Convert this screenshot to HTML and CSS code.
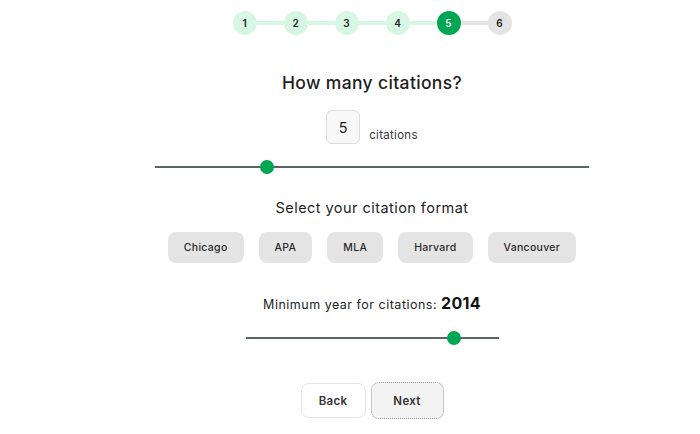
FILE: index.html
```html
<!DOCTYPE html>
<html lang="en">
<head>
<meta charset="utf-8">
<title>Citations</title>
<link rel="stylesheet" href="styles.css">
</head>
<body>
<div class="page">
  <main class="wizard">
    <ol class="stepper">
      <li class="step done">1</li>
      <li class="link done"></li>
      <li class="step done">2</li>
      <li class="link done"></li>
      <li class="step done">3</li>
      <li class="link done"></li>
      <li class="step done">4</li>
      <li class="link done"></li>
      <li class="step active">5</li>
      <li class="link"></li>
      <li class="step">6</li>
    </ol>

    <h1 class="title">How many citations?</h1>
    <div class="count-row">
      <div class="count-box">5</div>
      <span class="count-unit">citations</span>
    </div>
    <input class="range range-wide" type="range" min="0" max="20" value="5">

    <h2 class="subtitle">Select your citation format</h2>
    <div class="formats">
      <button class="format">Chicago</button>
      <button class="format">APA</button>
      <button class="format">MLA</button>
      <button class="format">Harvard</button>
      <button class="format">Vancouver</button>
    </div>

    <p class="year-label">Minimum year for citations: <strong class="year">2014</strong></p>
    <input class="range range-narrow" type="range" min="1960" max="2024" value="2014">

    <div class="nav">
      <button class="nav-btn back">Back</button>
      <button class="nav-btn next">Next</button>
    </div>
  </main>
</div>
</body>
</html>
```
FILE: styles.css
```css
* { box-sizing: border-box; }
html, body { margin: 0; padding: 0; background: #ffffff; }
body {
  font-family: "Inter", "Noto Sans", "Liberation Sans", sans-serif;
  color: #1f1f1f;
}
.page {
  padding-left: 44px;
}
.wizard {
  display: flex;
  flex-direction: column;
  align-items: center;
}
.stepper {
  list-style: none;
  margin: 11px 0 0 0;
  padding: 0;
  display: flex;
  align-items: center;
}
.step {
  width: 24px;
  height: 24px;
  border-radius: 50%;
  background: #e4e4e4;
  color: #222;
  font-size: 10px;
  font-weight: 600;
  display: flex;
  align-items: center;
  justify-content: center;
}
.step.done { background: #d6f7e3; }
.step.active { background: #00a651; color: #ffffff; }
.link {
  width: 27px;
  height: 4px;
  background: #e4e4e4;
}
.link.done { background: #d6f7e3; }

.title {
  margin: 36px 0 0 0;
  font-size: 17.5px;
  line-height: 24px;
  font-weight: 500;
  letter-spacing: 0.35px;
  color: #1e1e1e;
}
.count-row {
  margin-top: 15px;
  display: flex;
  align-items: flex-end;
  gap: 9px;
}
.count-box {
  width: 34px;
  height: 34px;
  border: 1px solid #dcdcdc;
  border-radius: 6px;
  background: #f8f8f8;
  display: flex;
  align-items: center;
  justify-content: center;
  font-size: 14.5px;
  color: #222;
}
.count-unit {
  font-size: 11.5px;
  line-height: 16px;
  letter-spacing: 0.3px;
  margin-bottom: 1px;
  color: #333;
}

.range {
  -webkit-appearance: none;
  appearance: none;
  background: transparent;
  height: 14px;
  margin: 0;
  padding: 0;
}
.range::-webkit-slider-runnable-track {
  height: 1.5px;
  background: #5c6464;
}
.range::-webkit-slider-thumb {
  -webkit-appearance: none;
  appearance: none;
  width: 14px;
  height: 14px;
  border-radius: 50%;
  background: #00a651;
  border: none;
  margin-top: -6.25px;
}
.range-wide {
  width: 434px;
  margin-top: 16px;
}
.range-narrow {
  width: 253px;
  margin-top: 14px;
}

.subtitle {
  margin: 24px 0 0 0;
  font-size: 14.5px;
  line-height: 20px;
  font-weight: 400;
  letter-spacing: 0.45px;
  color: #1e1e1e;
}
.formats {
  margin-top: 14px;
  display: flex;
  gap: 15px;
}
.format {
  height: 31px;
  padding: 0 16px;
  border: none;
  border-radius: 8px;
  background: #e4e4e4;
  font-family: inherit;
  font-size: 10.5px;
  font-weight: 500;
  letter-spacing: 0.3px;
  color: #2a2a2a;
}

.year-label {
  margin: 28px 0 0 0;
  font-size: 12.5px;
  line-height: 24px;
  letter-spacing: 0.5px;
  color: #1e1e1e;
}
.year {
  font-size: 16px;
  font-weight: 700;
  letter-spacing: 0.3px;
  color: #111;
}

.nav {
  margin-top: 37px;
  display: flex;
  align-items: center;
  gap: 5px;
}
.nav-btn {
  font-family: inherit;
  font-size: 11.5px;
  font-weight: 600;
  letter-spacing: 0.3px;
  color: #333;
  border-radius: 8px;
}
.back {
  width: 65px;
  height: 35px;
  background: #ffffff;
  border: 1px solid #e6e6e6;
}
.next {
  width: 73px;
  height: 37px;
  background: #f3f3f3;
  border: 1px dotted #9a9a9a;
}
```
